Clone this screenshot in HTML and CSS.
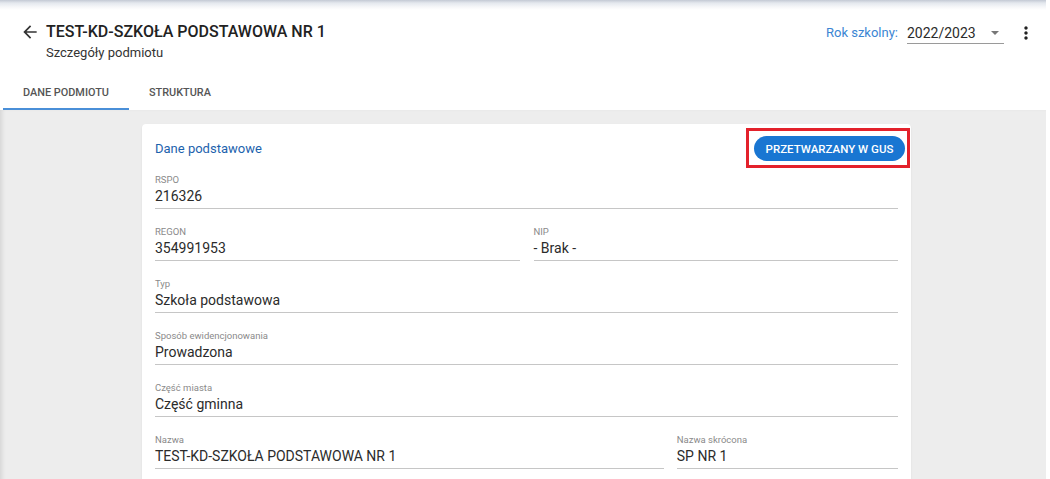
FILE: index.html
```html
<!DOCTYPE html>
<html lang="pl">
<head>
    <meta charset="UTF-8">
    <meta name="viewport" content="width=device-width, initial-scale=1.0">
    <title>Szczegóły podmiotu</title>
    <link rel="stylesheet" href="styles.css">
</head>
<body>
    <div class="app">
        <section class="header">
            <div class="title-row">
                <div class="title-block">
                    <div class="title-line">
                        <a href="#" class="back">
                            <svg viewBox="0 0 24 24" width="20" height="20"><path d="M20 11H7.83l5.59-5.59L12 4l-8 8 8 8 1.41-1.41L7.83 13H20v-2z" fill="#333"/></svg>
                        </a>
                        <h1>TEST-KD-SZKOŁA PODSTAWOWA NR 1</h1>
                    </div>
                    <div class="subtitle">Szczegóły podmiotu</div>
                </div>
                <div class="year">
                    <span class="year-label">Rok szkolny:</span>
                    <div class="year-select">
                        <span>2022/2023</span>
                        <span class="caret"></span>
                    </div>
                    <a href="#" class="more">
                        <svg viewBox="0 0 24 24" width="20" height="20"><path d="M12 8c1.1 0 2-.9 2-2s-.9-2-2-2-2 .9-2 2 .9 2 2 2zm0 2c-1.1 0-2 .9-2 2s.9 2 2 2 2-.9 2-2-.9-2-2-2zm0 6c-1.1 0-2 .9-2 2s.9 2 2 2 2-.9 2-2-.9-2-2-2z" fill="#222"/></svg>
                    </a>
                </div>
            </div>
            <ul class="tabs">
                <li class="active"><a href="#">DANE PODMIOTU</a></li>
                <li><a href="#">STRUKTURA</a></li>
            </ul>
        </section>

        <div class="content">
            <div class="card">
                <div class="card-head">
                    <h2>Dane podstawowe</h2>
                    <div class="highlight">
                        <button class="status">PRZETWARZANY W GUS</button>
                    </div>
                </div>

                <div class="field">
                    <label>RSPO</label>
                    <div class="value">216326</div>
                </div>
                <div class="row half">
                    <div class="field">
                        <label>REGON</label>
                        <div class="value">354991953</div>
                    </div>
                    <div class="field">
                        <label>NIP</label>
                        <div class="value">- Brak -</div>
                    </div>
                </div>
                <div class="field">
                    <label>Typ</label>
                    <div class="value">Szkoła podstawowa</div>
                </div>
                <div class="field">
                    <label>Sposób ewidencjonowania</label>
                    <div class="value">Prowadzona</div>
                </div>
                <div class="field">
                    <label>Część miasta</label>
                    <div class="value">Część gminna</div>
                </div>
                <div class="row wide">
                    <div class="field">
                        <label>Nazwa</label>
                        <div class="value">TEST-KD-SZKOŁA PODSTAWOWA NR 1</div>
                    </div>
                    <div class="field">
                        <label>Nazwa skrócona</label>
                        <div class="value">SP NR 1</div>
                    </div>
                </div>
            </div>
        </div>
    </div>
</body>
</html>
```

FILE: styles.css
```css
:root {
    --blue: #1976d2;
    --title-blue: #1c62ad;
    --text-color: #2b2b2b;
    --label-color: #8a8a8a;
    --line-color: #c6c6c6;
    --gray-bg: #ededed;
}

* {
    margin: 0;
    padding: 0;
    box-sizing: border-box;
    font-family: Roboto, 'Liberation Sans', sans-serif;
}

html, body { height: 100%; overflow: hidden; }

body { background-color: #fff; }

.app {
    width: calc(100% - 4px);
    height: 100%;
    display: flex;
    flex-direction: column;
    box-shadow: inset 4px 0 4px -2px rgba(0, 0, 0, 0.12);
}

/* --- HEADER --- */
.header {
    background: linear-gradient(to bottom, #c3c9d4 0px, #e4e8ee 3px, #f6f7f9 7px, #fff 10px);
}

.title-row {
    display: flex;
    justify-content: space-between;
    align-items: flex-start;
    padding: 22px 10px 0 20px;
    height: 62px;
}

.title-line { display: flex; align-items: center; gap: 6px; }
.back { display: flex; width: 20px; height: 20px; }
h1 { font-size: 16px; font-weight: 500; color: #222; line-height: 20px; }
.subtitle { font-size: 13px; color: #333; margin-left: 26px; margin-top: 3px; }

.year { display: flex; align-items: center; margin-top: -2px; }
.year-label { color: #3b85d3; font-size: 13px; margin-right: 9px; }
.year-select {
    display: flex;
    align-items: center;
    justify-content: space-between;
    width: 97px;
    height: 22px;
    border-bottom: 1px solid #9a9a9a;
    font-size: 14px;
    color: #2b2b2b;
    margin-top: 2px;
}
.caret {
    width: 0; height: 0;
    border-left: 4px solid transparent;
    border-right: 4px solid transparent;
    border-top: 4px solid #777;
    margin-right: 5px;
}
.more { display: flex; margin-left: 12px; margin-top: 1px; }

.tabs { display: flex; list-style: none; margin-left: 3px; height: 48px; }
.tabs li { display: flex; }
.tabs li a {
    display: flex;
    align-items: center;
    padding: 15px 20px 0 20px;
    font-size: 10.9px;
    font-weight: 500;
    color: #555;
    text-decoration: none;
    border-bottom: 2px solid transparent;
}
.tabs li.active a { border-bottom-color: #4a8fd8; }

/* --- CONTENT --- */
.content {
    flex: 1;
    background-color: var(--gray-bg);
    padding: 14px 0 0 142px;
    box-shadow: inset 4px 0 4px -2px rgba(0, 0, 0, 0.1);
}

.card {
    width: 769px;
    height: 100%;
    background-color: #fff;
    border-radius: 4px 4px 0 0;
    padding: 0 13px;
    box-shadow: 0 1px 2px rgba(0, 0, 0, 0.08);
}

.card-head {
    display: flex;
    justify-content: space-between;
    align-items: center;
    height: 49px;
}
.card-head h2 { font-size: 13px; font-weight: 400; color: var(--title-blue); }

.highlight {
    border: 3px solid #e3212b;
    padding: 5px 2px 4px 5px;
    margin-right: -12px;
    margin-top: -1px;
}
.status {
    display: block;
    background-color: var(--blue);
    color: #fff;
    border: none;
    border-radius: 13px;
    height: 25px;
    width: 151px;
    font-size: 11.5px;
    font-weight: 500;
}

.row { display: grid; column-gap: 14px; }
.row.half { grid-template-columns: 1fr 1fr; }
.row.wide { grid-template-columns: 2.3fr 1fr; column-gap: 13px; }

.field { margin-bottom: 16px; }
.field label { display: block; font-size: 9.5px; color: var(--label-color); line-height: 13px; }
.field .value {
    font-size: 14px;
    color: var(--text-color);
    line-height: 20px;
    padding-bottom: 2px;
    border-bottom: 1px solid var(--line-color);
}
```
